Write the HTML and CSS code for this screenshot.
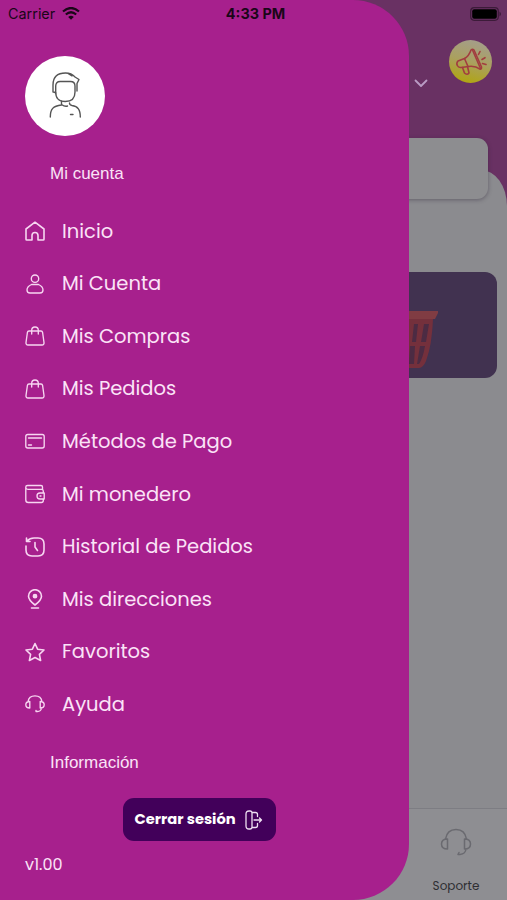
FILE: index.html
```html
<!DOCTYPE html>
<html lang="es">
<head>
    <meta charset="UTF-8">
    <meta name="viewport" content="width=device-width, initial-scale=1.0">
    <title>Menú</title>
    <link rel="stylesheet" href="styles.css">
</head>
<body>
    <div class="phone">
        <!-- Home screen, dimmed behind the menu -->
        <main class="home">
            <header class="home-header">
                <svg class="chevron" width="14" height="9" viewBox="0 0 14 9"><path d="M1.500 1.500 7 7l5.500-5.500"/></svg>
                <div class="promo">
                    <svg width="34" height="34" viewBox="0 0 34 34">
                        <path d="M4 16 10.500 13.500Q15 11 17 5q1.500-1.500 3 0l7.500 17q.2 2-1.500 2.200-5-3.700-11.500-2.700L7 22.500q-2.500.3-3.700-2T4 16z"/>
                        <path d="m18.500 5 8 18.500M10.500 13.500l3.500 8M8.500 22.500l2 5.500q2.500 2.500 4.500 0l-1.500-6.500"/>
                        <path d="m24.500 9.500 1.500-3M28 14.500l3-1.800M28.500 18.500l3.500 1"/>
                    </svg>
                </div>
            </header>
            <div class="search"></div>
            <section class="sheet">
                <div class="banner">
                    <svg width="60" height="64" viewBox="0 0 60 64">
                        <path class="basket-body" d="M0 10h54q-1 26-7 42-3 7-7 7H0z"/>
                        <path class="basket-holes" d="M35 15h4l-2 18h-4zM45 15h5l-3 18h-5zM31 37h5l-1 18h-5zM41 37h5q-2 12-6 18h-2z"/>
                        <path class="basket-rim" d="M0 2h59v2l-3 6H0z"/>
                    </svg>
                </div>
            </section>
            <nav class="tabbar">
                <div class="tab">
                    <svg width="32" height="29" viewBox="0 0 32 29">
                        <path d="M5.500 11C6.500 5 10.500 1.500 16 1.500S25.500 5 26.500 11M7.500 11v10C4 21 1.500 19.500 1.500 16S4 11 7.500 11zM24.500 11v10c3.500 0 6-1.500 6-5s-2.500-5-6-5zM26 21q-.5 5-6 5.500h-2l1-2"/>
                    </svg>
                    <span>Soporte</span>
                </div>
            </nav>
        </main>

        <aside class="drawer">
            <div class="avatar">
                <svg width="34" height="48" viewBox="0 0 34 48">
                    <path d="M5 20V13Q5 1 17.500 1q6 0 9.500 4l4 2.500-2 4V19M20 1.500l4 2.500M5 20q2 0 2.700 1"/>
                    <path d="M7.700 14q0-4.500 4.500-4.500h10.300Q27 9.500 27 14v6q0 9.500-9.700 9.500T7.700 20z"/>
                    <path d="M13.500 29v4M13.500 32.500q3.500 2.500 6 1.500M13.500 33C5 34 2.300 37 2.300 45M21.500 31q0 2 2.500 2.500c6 1 8.300 4 8.300 11.500M22.500 42.500h2.500"/>
                </svg>
            </div>
            <h2 class="drawer-title">Mi cuenta</h2>

            <ul class="menu">
                <li>
                    <svg viewBox="0 0 20 20"><path d="M1 8 10 1.200 19 8v10.200a.8.800 0 0 1-.8.800H13v-4.500q0-3-3-3t-3 3V19H1.800a.8.800 0 0 1-.8-.8z"/></svg>
                    <span>Inicio</span>
                </li>
                <li>
                    <svg class="thin" viewBox="0 0 20 20"><circle cx="10" cy="4.700" r="3.700"/><path d="M6.500 10.500h7q4.500 2 4.500 5.500 0 3-3 3H5q-3 0-3-3 0-3.500 4.500-5.500z"/></svg>
                    <span>Mi Cuenta</span>
                </li>
                <li>
                    <svg class="thin" viewBox="0 0 20 20"><path d="M4 5h12q1.300 0 1.600 1.500L19 16.500q.2 2.500-2 2.500H3q-2.200 0-2-2.500l1.400-10Q2.700 5 4 5zM6.700 8V4.300q0-3.300 3.300-3.300t3.300 3.300V8"/></svg>
                    <span>Mis Compras</span>
                </li>
                <li>
                    <svg class="thin" viewBox="0 0 20 20"><path d="M4 5h12q1.300 0 1.600 1.500L19 16.500q.2 2.500-2 2.500H3q-2.200 0-2-2.500l1.400-10Q2.700 5 4 5zM6.700 8V4.300q0-3.300 3.300-3.300t3.300 3.300V8"/></svg>
                    <span>Mis Pedidos</span>
                </li>
                <li>
                    <svg class="thin" viewBox="0 0 20 20"><rect x=".8" y="3.500" width="18.400" height="13.500" rx="2"/><path d="M3.500 7h13M3.500 14h3"/></svg>
                    <span>Métodos de Pago</span>
                </li>
                <li>
                    <svg class="thin" viewBox="0 0 20 20"><path d="M17.500 5V3q0-1.500-1.500-1.500H2.500Q.8 1.500.8 3v13q0 2.500 2.500 2.500h13q2 0 2-2V15M.8 3.500Q1 5.300 3 5.300h13.500q1.800 0 1.800 1.700v2M19.200 9H15q-3 0-3 3t3 3h4.200zM15 12h1"/></svg>
                    <span>Mi monedero</span>
                </li>
                <li>
                    <svg viewBox="0 0 20 20"><path d="M1 9v4q0 6 6 6h6q6 0 6-6V7q0-6-6-6H9Q5 1 2 4M1.500 1v3.500H5M10 5.500V10l2.500 3.500"/></svg>
                    <span>Historial de Pedidos</span>
                </li>
                <li>
                    <svg viewBox="0 0 20 20"><path d="M10 16Q3.500 11 3.500 7.200a6.500 6.500 0 0 1 13 0Q16.500 11 10 16zM6.500 19h7"/><circle class="dot" cx="10" cy="7.200" r="1.600"/></svg>
                    <span>Mis direcciones</span>
                </li>
                <li>
                    <svg viewBox="0 0 20 20"><path d="m10 1.500 2.600 5.700 6.400.8-4.600 4.300 1.200 6.200-5.600-3-5.600 3 1.200-6.200L1 8l6.400-.8z"/></svg>
                    <span>Favoritos</span>
                </li>
                <li>
                    <svg class="thin" viewBox="0 0 20 20"><path d="M3 7.500C3.500 4 6 1.800 10 1.800S16.500 4 17 7.500M4.800 7.500v6.500Q.8 14 .8 10.800t4-3.300zM15.200 7.500v6.500q4 0 4-3.200t-4-3.300zM16.500 14q-.5 3.500-4 3.500h-1.500v-1.200"/></svg>
                    <span>Ayuda</span>
                </li>
            </ul>

            <h2 class="drawer-title">Información</h2>
            <button class="logout">
                <span>Cerrar sesión</span>
                <svg width="18" height="20" viewBox="0 0 18 20"><path d="M4 1h1q2 0 2 2v14q0 2-2 2H4q-3 0-3-3V4q0-3 3-3zM7 2.500h3.500q2 0 2 2V6.500M7 17.500h3.500q2 0 2-2V13.500M9 10h7.500M14.500 8l2 2-2 2"/></svg>
            </button>
            <p class="version">v1.00</p>
        </aside>

        <div class="statusbar">
            <div class="carrier">
                <span>Carrier</span>
                <svg width="18" height="13" viewBox="0 0 18 13"><path d="M1 4.500q8-7 16 0M3.800 7.500q5.200-4.500 10.400 0"/><path class="wifi-dot" d="M9 12.800 6.200 9.900q2.800-2.200 5.600 0z"/></svg>
            </div>
            <strong class="clock">4:33 PM</strong>
            <svg class="battery" width="32" height="14" viewBox="0 0 32 14"><rect class="shell" x=".7" y=".7" width="27.600" height="12.600" rx="3.500"/><rect x="2.200" y="2.200" width="24.600" height="9.600" rx="2"/><path class="cap" d="M29.500 4.500q3 2.500 0 5z"/></svg>
        </div>
    </div>
</body>
</html>
```
FILE: styles.css
```css
* {
    box-sizing: border-box;
}
body {
    margin: 0;
    font-family: Poppins, Inter, sans-serif;
}
svg {
    fill: none;
    stroke-linecap: round;
    stroke-linejoin: round;
    flex: none;
}
.phone {
    position: relative;
    width: 507px;
    height: 900px;
    overflow: hidden;
}

/* Home screen */
.home {
    display: flex;
    flex-direction: column;
    height: 900px;
    background: linear-gradient(#693163 0 230px, #8c8c90 230px);
}
.home-header {
    display: flex;
    justify-content: flex-end;
    height: 138px;
    padding: 40px 15px 0 0;
}
.chevron {
    margin: 39px 21px 0 0;
    stroke: #b99cc4;
    stroke-width: 1.8;
}
.promo {
    display: flex;
    align-items: center;
    justify-content: center;
    width: 43px;
    height: 43px;
    border-radius: 50%;
    background: linear-gradient(195deg, #a39d92, #aaa060 50%, #b0a514 90%);
}
.promo svg {
    stroke: #a23d3f;
    stroke-width: 1.6;
}
.search {
    position: relative;
    height: 61px;
    margin-right: 19px;
    border-radius: 11px;
    background: #8d8d90;
    box-shadow: 0 1px 4px rgba(40, 30, 50, 0.4);
    z-index: 1;
}
.sheet {
    flex: 1;
    margin-top: -29px;
    padding: 102px 10px 0 0;
    border-top-right-radius: 26px 36px;
    background: #8b8b8f;
}
.banner {
    height: 106px;
    padding: 37px 0 0 379px;
    border-radius: 12px;
    background: #413250;
}
.banner svg {
    display: block;
}
.basket-body {
    fill: #74303c;
}
.basket-holes {
    fill: #4c2b43;
}
.basket-rim {
    fill: #803c43;
}
.tabbar {
    display: flex;
    justify-content: flex-end;
    height: 92px;
    border-top: 1px solid #7d7d83;
    background: #8e8e92;
}
.tab {
    display: flex;
    flex-direction: column;
    align-items: center;
    width: 102px;
    padding-top: 19px;
    font-size: 12px;
    line-height: 18px;
    color: #2e2e33;
}
.tab svg {
    margin-bottom: 20px;
    stroke: #6a6a70;
    stroke-width: 1.5;
}

/* Side menu */
.drawer {
    position: absolute;
    top: 0;
    left: 0;
    z-index: 2;
    display: flex;
    flex-direction: column;
    width: 409px;
    height: 900px;
    padding: 56px 25px 0;
    border-radius: 0 56px 56px 0;
    background: #a7208d;
    color: #fbe3f7;
}
.avatar {
    display: flex;
    align-items: center;
    justify-content: center;
    width: 80px;
    height: 80px;
    border-radius: 50%;
    background: #fff;
}
.avatar svg {
    stroke: #555;
    stroke-width: 1.4;
}
.drawer-title {
    margin: 27px 0 0 25px;
    font: 17px/22px "Liberation Sans", Arial, sans-serif;
}
.menu {
    display: flex;
    flex-direction: column;
    margin: 20px 0 0;
    padding: 0;
    list-style: none;
}
.menu li {
    display: flex;
    align-items: center;
    gap: 17px;
    height: 52.550px;
    font-size: 19.500px;
    white-space: nowrap;
}
.menu svg {
    width: 20px;
    height: 20px;
    margin-left: -0.500px;
    margin-right: 0.500px;
    stroke: #f7d6f1;
    stroke-width: 1.6;
}
.menu .thin {
    stroke-width: 1.35;
}
.menu .dot {
    fill: #f7d6f1;
}
.menu + .drawer-title {
    margin-top: 22px;
}
.logout {
    display: flex;
    align-items: center;
    gap: 9px;
    width: 153px;
    height: 43px;
    margin: 24px 0 0 97.500px;
    padding: 0 12px;
    border: 0;
    border-radius: 11px;
    background: #42005a;
    color: #fff;
    font: bold 14.700px Poppins, Inter, sans-serif;
    white-space: nowrap;
}
.logout svg {
    stroke: #eedff2;
    stroke-width: 1.3;
}
.version {
    margin: 12px 0 0;
    font-size: 16px;
    line-height: 24px;
}

/* Status bar */
.statusbar {
    position: absolute;
    top: 0;
    left: 0;
    z-index: 3;
    display: grid;
    grid-template-columns: 1fr auto 1fr;
    align-items: center;
    width: 507px;
    height: 27px;
    padding: 0 4px 0 8px;
    color: #1a0618;
    font-family: Inter, sans-serif;
    font-size: 14.400px;
}
.carrier {
    display: flex;
    align-items: center;
    gap: 7px;
}
.carrier svg {
    stroke: #1a0618;
    stroke-width: 2.2;
    stroke-linecap: butt;
}
.carrier .wifi-dot {
    fill: #1a0618;
    stroke: none;
}
.clock {
    font-weight: 700;
}
.battery {
    justify-self: end;
    margin-right: 1px;
    fill: #000;
}
.battery .shell {
    fill: none;
    stroke: #3c1b39;
    stroke-width: 1.2;
}
.battery .cap {
    fill: #3c1b39;
}
```
